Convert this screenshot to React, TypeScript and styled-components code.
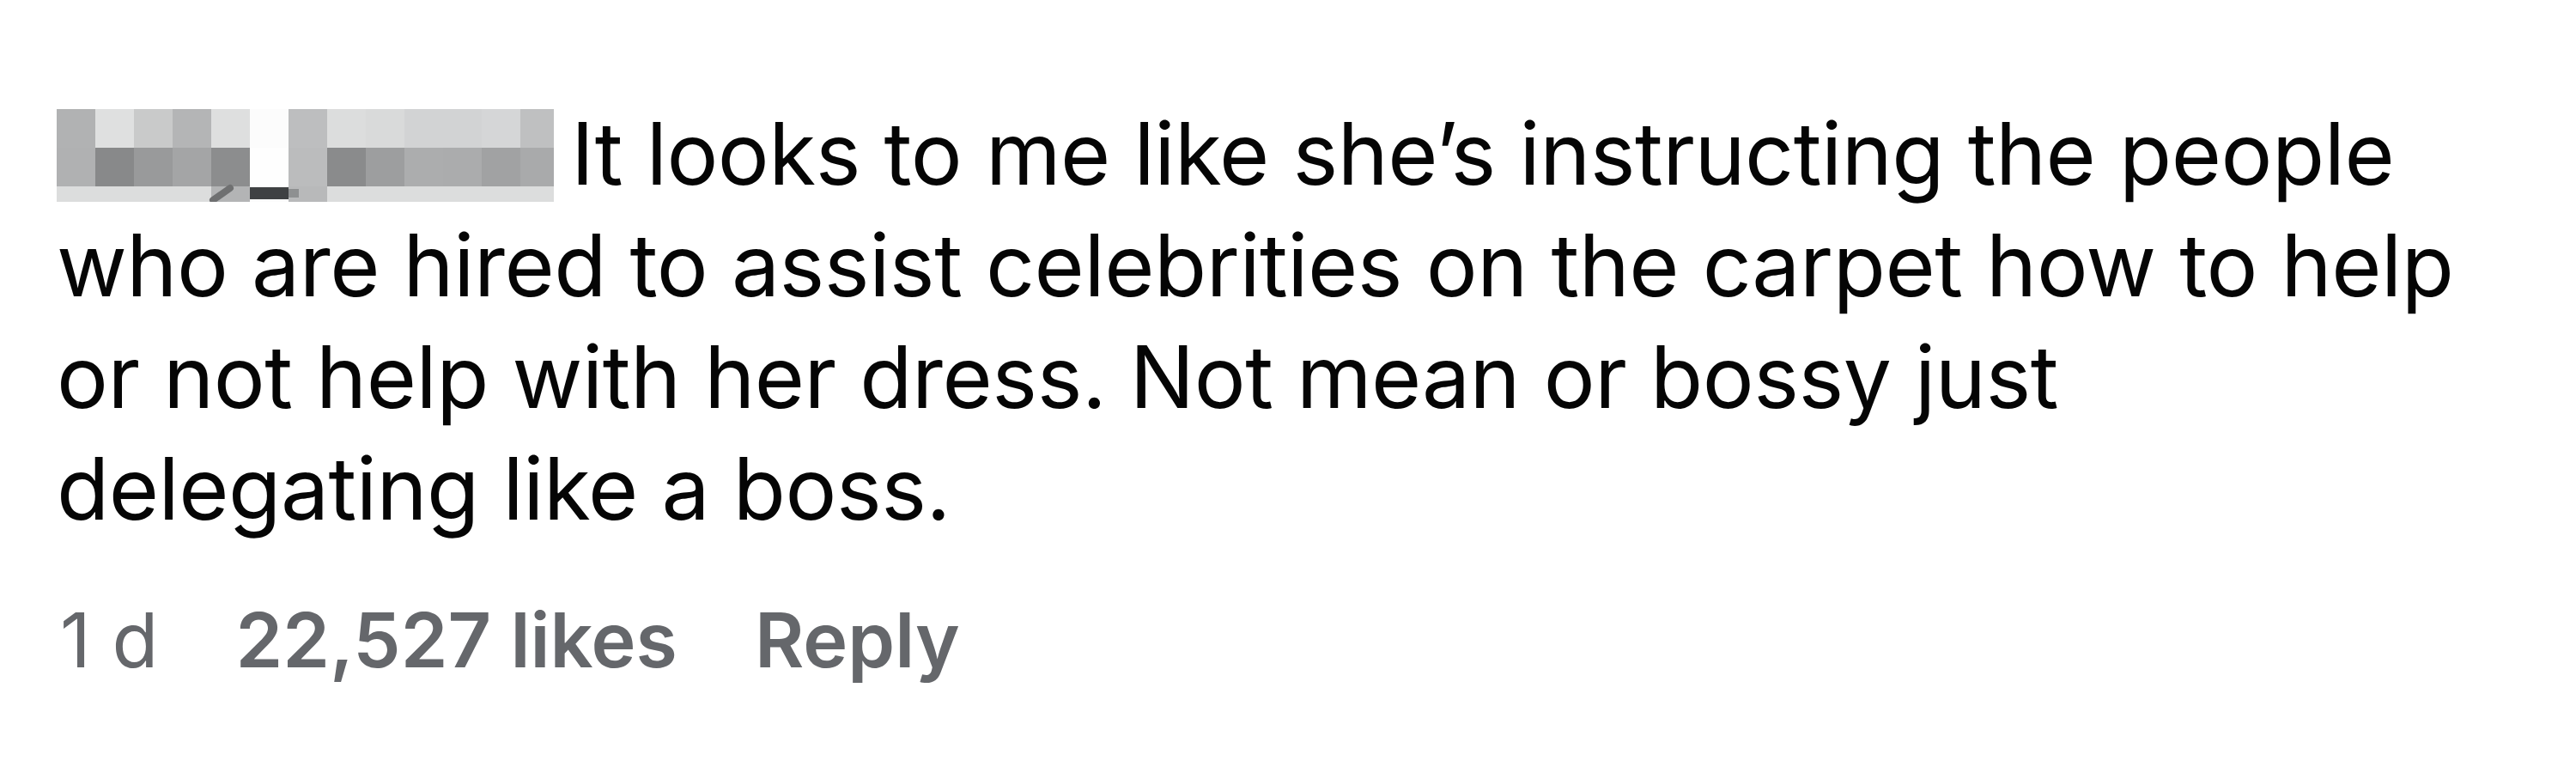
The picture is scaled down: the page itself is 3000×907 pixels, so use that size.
import React from "react";
import styled, { createGlobalStyle } from "styled-components";

const GlobalStyle = createGlobalStyle`
  html, body {
    margin: 0;
    padding: 0;
    background: #ffffff;
  }
  body {
    font-family: Inter, "Noto Sans", "Liberation Sans", sans-serif;
    -webkit-font-smoothing: antialiased;
  }
`;

const Comment = styled.article`
  box-sizing: border-box;
  width: 3000px;
  height: 907px;
  padding: 114px 0 0 66px;
  background: #ffffff;
  display: flex;
  flex-direction: column;
`;

const Body = styled.p`
  margin: 0;
  font-size: 100px;
  line-height: 130px;
  color: #050505;
  white-space: nowrap;
  letter-spacing: -0.5px;
`;

const NameBlur = styled.svg`
  display: inline-block;
  width: 579px;
  height: 108px;
  margin-right: 20px;
  vertical-align: -20px;
`;

const Meta = styled.div`
  display: flex;
  align-items: baseline;
  gap: 90px;
  margin-top: 56px;
  font-size: 88px;
  line-height: 110px;
  color: #65676b;
  padding-left: 4px;
`;

const MetaItem = styled.span<{ $bold?: boolean }>`
  font-weight: ${(p) => (p.$bold ? 600 : 400)};
  white-space: nowrap;
`;

const rows: string[][] = [
  ["#b1b2b3", "#dfe0e0", "#c9caca", "#b4b5b6", "#dedfdf", "#fcfcfc", "#bdbebf", "#dcdddd", "#d9dada", "#d2d3d4", "#d2d3d4", "#d5d6d7", "#bfc0c1"],
  ["#b0b1b2", "#88898a", "#999a9b", "#a4a5a6", "#8c8d8e", "#fefefe", "#bbbcbd", "#8a8b8c", "#9d9e9f", "#acadae", "#abacad", "#a1a2a3", "#a9aaab"],
  ["#dcdddd", "#dcdddd", "#dcdddd", "#dcdddd", "#b3b4b5", "#fcfcfc", "#b8b9ba", "#dcdddd", "#dcdddd", "#dcdddd", "#dcdddd", "#dcdddd", "#dcdddd"],
];
const rowY = [0, 45, 90];
const rowH = [45, 45, 18];

function Mosaic() {
  return (
    <NameBlur viewBox="0 0 579 108" aria-label="blurred name">
      {rows.map((row, r) =>
        row.map((c, i) => (
          <rect
            key={`${r}-${i}`}
            x={i * 45}
            y={rowY[r]}
            width={i === 12 ? 39 : 45}
            height={rowH[r]}
            fill={c}
          />
        ))
      )}
      <line x1="182" y1="106" x2="202" y2="92" stroke="#6f7071" strokeWidth="8" strokeLinecap="round" />
      <rect x="225" y="91" width="45" height="14" fill="#3f4143" />
      <rect x="270" y="93" width="12" height="10" fill="#8e9091" />
    </NameBlur>
  );
}

export default function App() {
  return (
    <>
      <GlobalStyle />
      <Comment>
        <Body>
          <Mosaic />
          It looks to me like she’s instructing the people
          <br />
          who are hired to assist celebrities on the carpet how to help
          <br />
          or not help with her dress. Not mean or bossy just
          <br />
          delegating like a boss.
        </Body>
        <Meta>
          <MetaItem>1 d</MetaItem>
          <MetaItem $bold>22,527 likes</MetaItem>
          <MetaItem $bold>Reply</MetaItem>
        </Meta>
      </Comment>
    </>
  );
}
